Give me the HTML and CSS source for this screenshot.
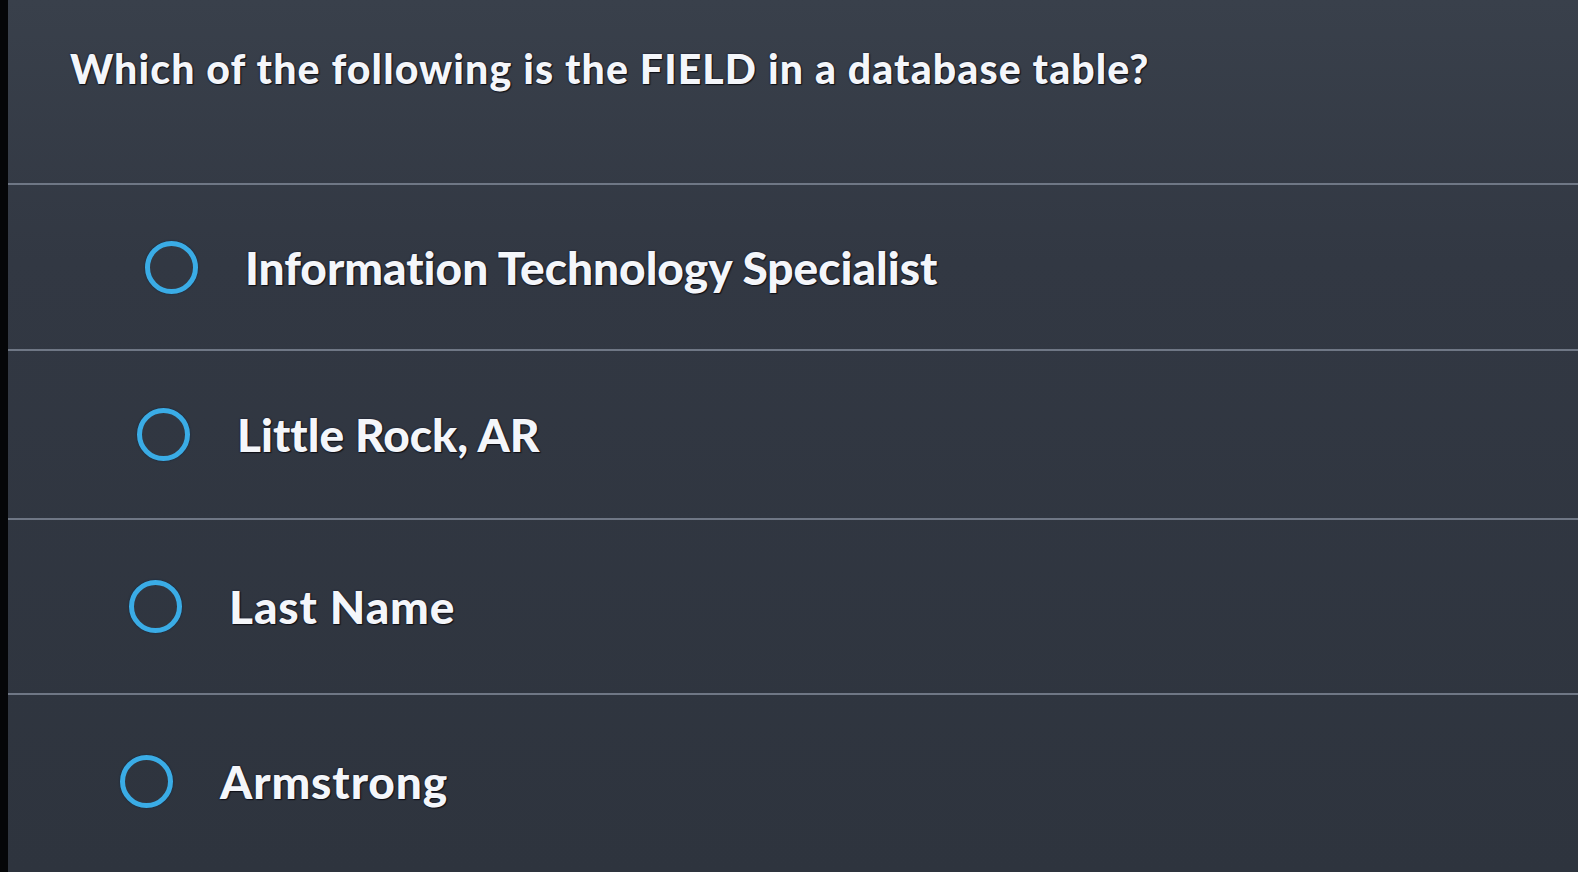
FILE: index.html
```html
<!DOCTYPE html>
<html>
<head>
<meta charset="utf-8">
<link rel="stylesheet" href="styles.css">
</head>
<body>
<div class="frame">
  <div class="screen">
    <div class="question">Which of the following is the FIELD in a database table?</div>
    <div class="options">
      <div class="option o1"><span class="radio"></span><span class="label">Information Technology Specialist</span></div>
      <div class="option o2"><span class="radio"></span><span class="label">Little Rock, AR</span></div>
      <div class="option o3"><span class="radio"></span><span class="label">Last Name</span></div>
      <div class="option o4"><span class="radio"></span><span class="label">Armstrong</span></div>
    </div>
  </div>
</div>
</body>
</html>
```
FILE: styles.css
```css
html, body {
  margin: 0;
  padding: 0;
  background: #050608;
}
.frame {
  width: 1578px;
  height: 872px;
  overflow: hidden;
  display: flex;
}
.screen {
  flex: 1;
  margin-left: 8px;
  background: linear-gradient(180deg, #39404b 0%, #323843 30%, #2e343e 100%);
  display: flex;
  flex-direction: column;
  font-family: "Lato", "Open Sans", sans-serif;
  font-variant-ligatures: none;
  color: #f4f6fa;
}
.question {
  height: 183px;
  box-sizing: border-box;
  padding: 44px 0 0 62px;
  font-size: 41px;
  font-weight: 900;
  letter-spacing: 1.1px;
  text-shadow: 0 0 2px #0b0f25, 1px 1px 1px #111;
}
.options {
  flex: 1;
  display: flex;
  flex-direction: column;
}
.option {
  border-top: 2px solid #6f7785;
  display: flex;
  align-items: center;
  gap: 47px;
  box-sizing: border-box;
}
.o1 { height: 166px; padding-left: 137px; }
.o2 { height: 169px; padding-left: 129px; }
.o3 { height: 175px; padding-left: 121px; }
.o4 { flex: 1; padding-left: 112px; padding-bottom: 4px; }
.radio {
  width: 43px;
  height: 43px;
  border: 5px solid #3aace6;
  border-radius: 50%;
  flex: none;
  box-shadow: 0 0 2px #0a2540;
}
.label {
  font-size: 46px;
  font-weight: 900;
  letter-spacing: 0px;
  text-shadow: 0 0 2px #0b0f25, 1px 1px 1px #111;
}
.o3 .label, .o4 .label { letter-spacing: 0.9px; }
```
